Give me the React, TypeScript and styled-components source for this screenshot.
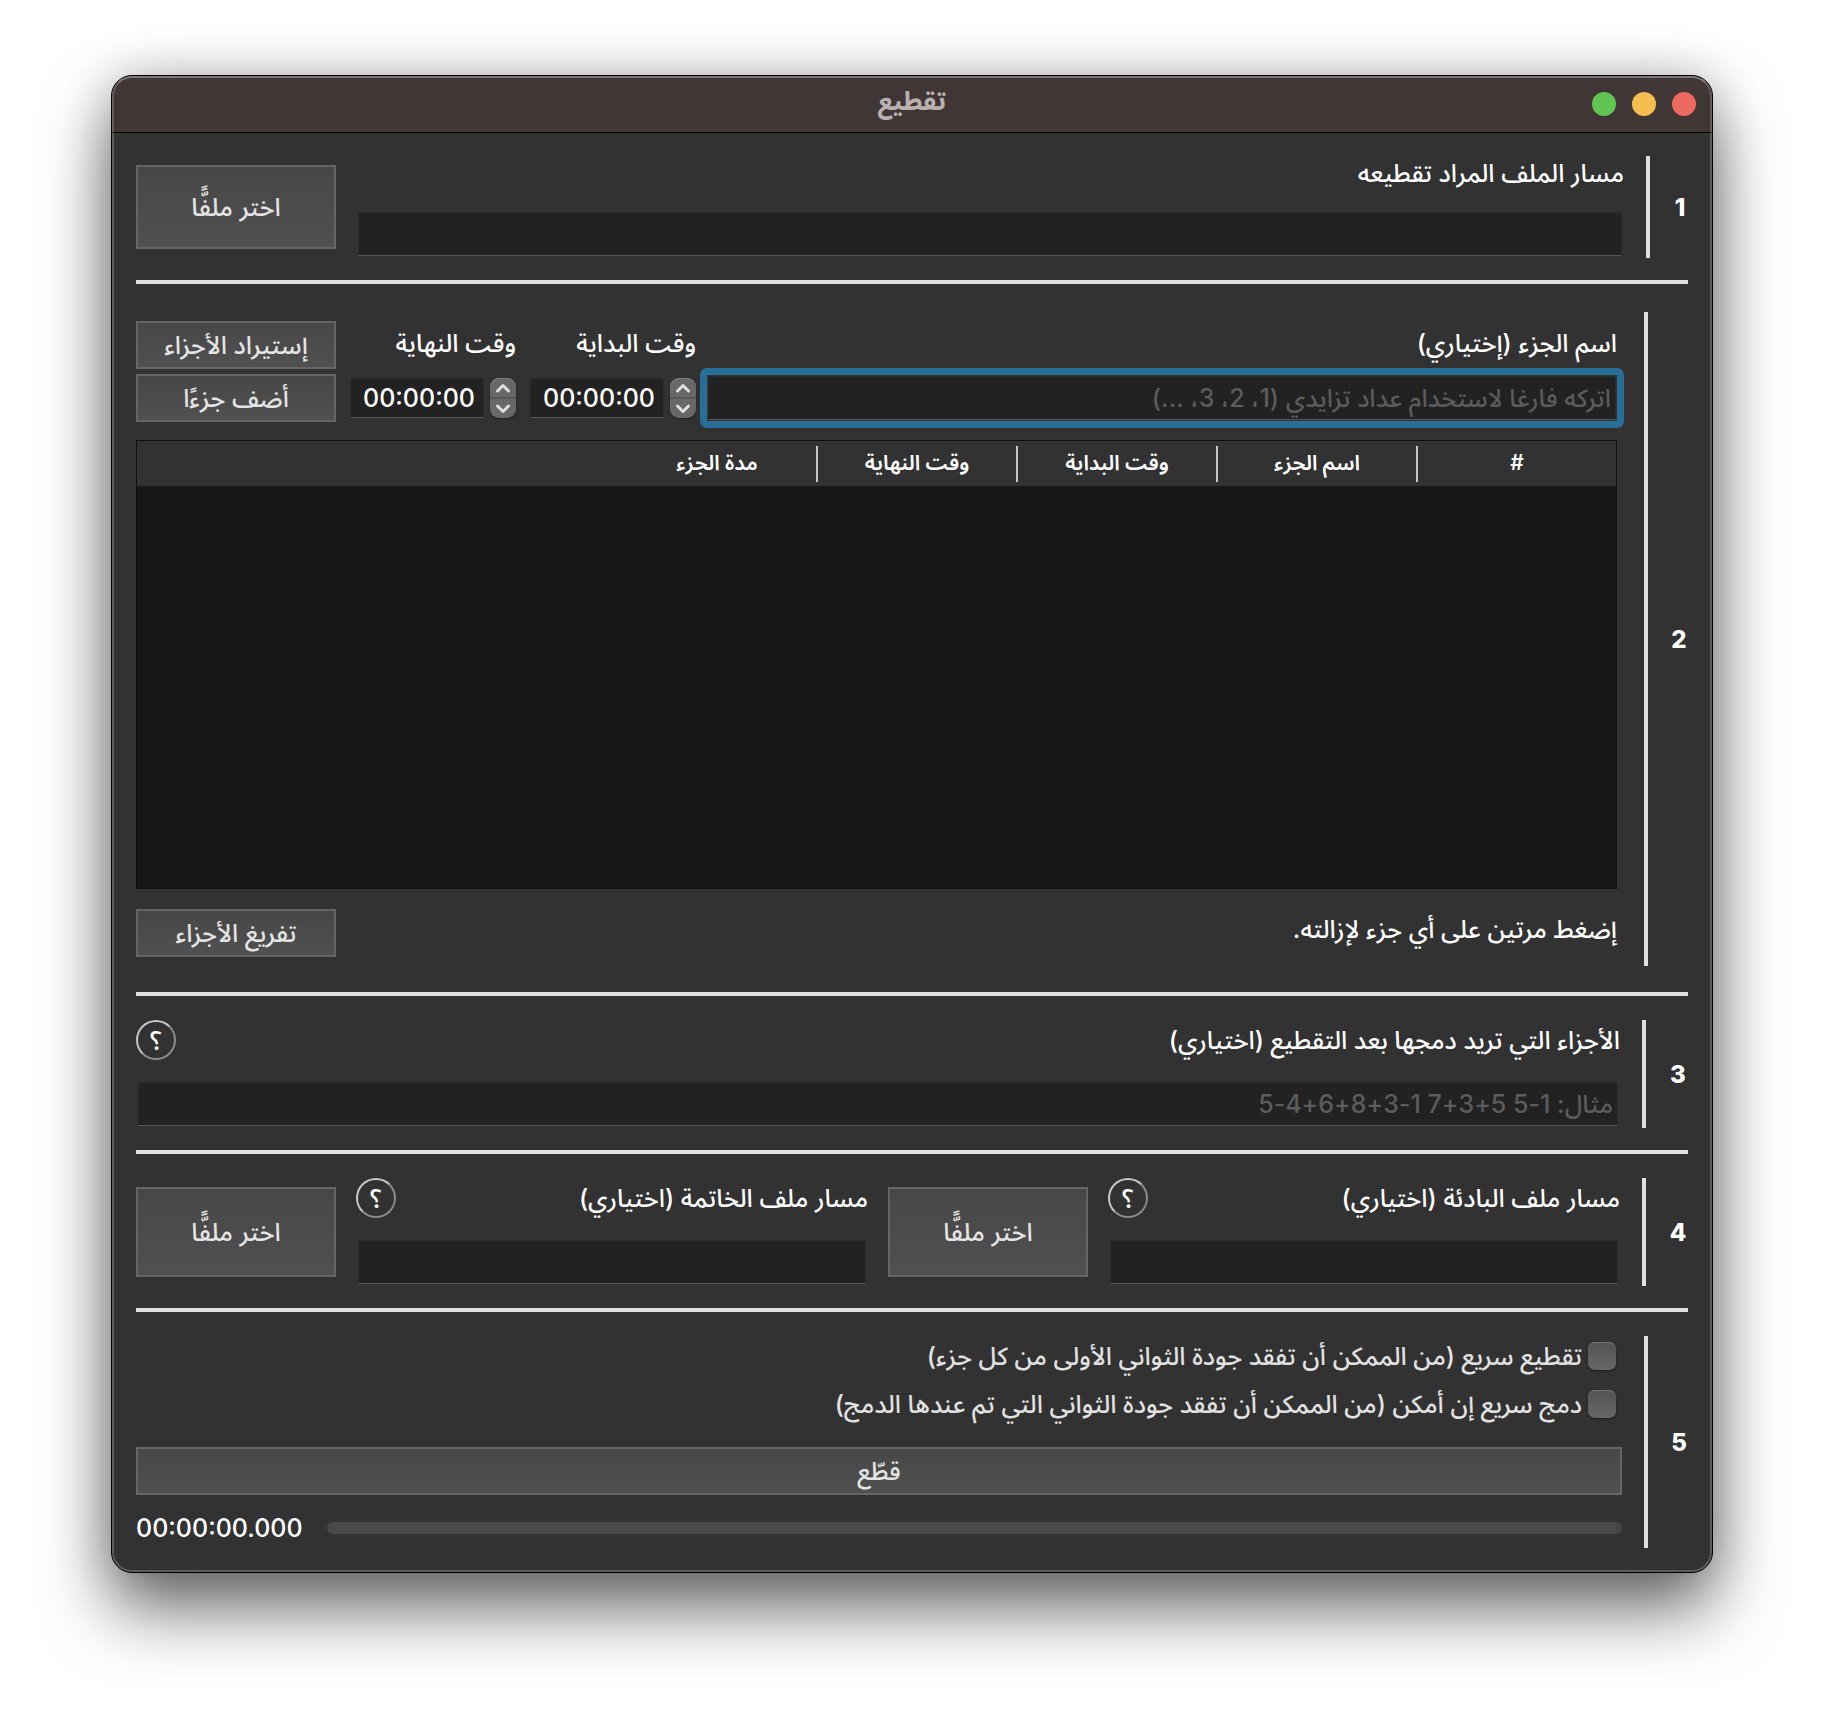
import React from "react";
import styled, { createGlobalStyle } from "styled-components";

const GlobalStyle = createGlobalStyle`
  *, *::before, *::after { box-sizing: border-box; }
  body {
    margin: 0;
    background: #fff;
    color: #fff;
    font-family: Inter, "Noto Sans Arabic", "DejaVu Sans", sans-serif;
    font-size: 25px;
    font-weight: 500;
  }
  button, input { font: inherit; color: inherit; margin: 0; }
`;

const Desktop = styled.main`
  display: flex;
  min-height: 100vh;
  padding: 75px 111px 147px;
`;

const Window = styled.section`
  position: relative;
  display: flex;
  flex: 1;
  flex-direction: column;
  min-width: 1200px;
  border: 1px solid #000;
  border-radius: 21px;
  background: #323232;
  box-shadow: 0 36px 70px rgba(0, 0, 0, 0.58), 0 0 50px rgba(0, 0, 0, 0.2);

  &::after {
    content: "";
    position: absolute;
    inset: 0;
    border: 2px solid rgba(255, 255, 255, 0.2);
    border-top-color: rgba(255, 255, 255, 0.32);
    border-radius: 20px;
    pointer-events: none;
  }
`;

const TitleBar = styled.header`
  display: grid;
  grid-template-columns: 1fr auto 1fr;
  align-items: center;
  height: 57px;
  padding: 0 16px;
  border-bottom: 1px solid #000;
  border-radius: 20px 20px 0 0;
  background: #403635;
`;

const Title = styled.h1`
  margin: 0;
  padding-bottom: 6px;
  color: #b8b1b0;
  font-size: 26px;
  font-weight: 700;
  line-height: 40px;
`;

const Lights = styled.div`
  display: flex;
  gap: 16px;
`;

const Light = styled.button<{ $color: string }>`
  width: 24px;
  height: 24px;
  padding: 0;
  border: 0;
  border-radius: 50%;
  background: ${(p) => p.$color};
`;

const Content = styled.div`
  display: flex;
  flex: 1;
  flex-direction: column;
  padding: 0 24px;
`;

const Step = styled.section<{ $grow?: boolean; $pad?: string }>`
  display: flex;
  flex: ${(p) => (p.$grow ? "1 0 auto" : "none")};
  gap: 22px;
  padding: ${(p) => p.$pad ?? "24px 0 22px"};

  & + & { border-top: 4px solid #e0e0e0; }
`;

const StepNumber = styled.h2<{ $width: number }>`
  align-self: center;
  width: ${(p) => p.$width}px;
  margin: 0;
  padding-top: 2px;
  font-size: 24px;
  font-weight: 800;
  line-height: 32px;
  text-align: center;
`;

const Divider = styled.div`
  width: 4px;
  background: #e0e0e0;
`;

const StepBody = styled.div<{ $column?: boolean }>`
  display: flex;
  flex: 1;
  flex-direction: ${(p) => (p.$column ? "column" : "row")};
  gap: ${(p) => (p.$column ? 0 : 20)}px;
  min-width: 0;
`;

const PushButton = styled.button<{ $tall?: boolean }>`
  flex: none;
  width: 200px;
  height: ${(p) => (p.$tall ? "auto" : "48px")};
  margin: ${(p) => (p.$tall ? "9px 0" : "0")};
  padding: 0;
  border: 2px solid #666;
  background: linear-gradient(#474747, #505050);
  color: #e4e4e4;
  line-height: 32px;
`;

const WideButton = styled(PushButton)`
  width: 100%;
  margin-top: 19px;
`;

const Field = styled.div`
  display: flex;
  flex: 1;
  flex-direction: column;
  gap: 22px;
  min-width: 0;
  padding-bottom: 2px;
`;

const FieldHead = styled.div<{ $height: number }>`
  display: flex;
  align-items: center;
  justify-content: space-between;
  height: ${(p) => p.$height}px;
`;

const Label = styled.label`
  line-height: 32px;
  white-space: nowrap;
`;

const TextBox = styled.input`
  min-width: 0;
  height: 44px;
  margin: 0 2px;
  padding: 0 4px;
  border: 1px solid #2c2c2c;
  border-bottom-color: #565656;
  outline: none;
  background: #222;

  &::placeholder { color: #5c5c5c; opacity: 1; }
`;

const HelpButton = styled.button`
  width: 40px;
  height: 40px;
  padding: 0;
  border: 2px solid;
  border-color: #c8c8c8 #8a8a8a #8a8a8a #c8c8c8;
  border-radius: 50%;
  background: transparent;
  line-height: 32px;
`;

const PartForm = styled.div`
  display: grid;
  grid-template-columns: 1fr 166px 166px 200px;
  grid-template-rows: 48px 50px;
  gap: 4px 14px;
  align-items: center;
  padding: 9px 5px 0 0;

  ${Label} { padding-bottom: 4px; }
`;

const FocusFrame = styled.div`
  display: flex;
  margin: 0 -7px 0 -10px;
  padding: 1px;
  border: 7px solid #276e99;
  border-radius: 7px;
`;

const NameBox = styled(TextBox)`
  flex: 1;
  margin: 0;
`;

const TimePicker = styled.div`
  display: flex;
  gap: 6px;
`;

const TimeBox = styled(TextBox)`
  flex: 1;
  height: 40px;
  margin: 0;
  padding: 0 8px;
  direction: ltr;
  text-align: right;
`;

const Stepper = styled.div`
  display: flex;
  flex-direction: column;
  width: 26px;
  height: 40px;
  overflow: hidden;
  border-radius: 9px;
  background: #686868;
  box-shadow: 0 1px 2px rgba(0, 0, 0, 0.4), inset 0 1px 0 #808080;
`;

const StepperButton = styled.button`
  display: flex;
  flex: 1;
  align-items: center;
  justify-content: center;
  padding: 0;
  border: 0;
  background: transparent;

  & + & { border-top: 2px solid #575757; }
`;

const PartsBox = styled.div`
  flex: 1 0 300px;
  margin: 17px 5px 20px 0;
  border: 1px solid #0f0f0f;
  background: #171717;
`;

const PartsTable = styled.table`
  width: 100%;
  border-collapse: collapse;
  table-layout: fixed;
`;

const HeadCell = styled.th<{ $auto?: boolean }>`
  width: ${(p) => (p.$auto ? "auto" : "200px")};
  height: 45px;
  padding: 0;
  background: #323232;
  font-size: 21px;
  font-weight: 600;
`;

const HeadText = styled.span<{ $line: boolean }>`
  display: block;
  padding-bottom: 2px;
  border-left: 2px solid ${(p) => (p.$line ? "#c4c4c4" : "transparent")};
  line-height: 34px;
`;

const PartsFoot = styled.div`
  display: flex;
  justify-content: space-between;
  padding: 0 5px 9px 0;
`;

const Hint = styled.p`
  margin: 0;
  line-height: 40px;
`;

const CheckRow = styled.label`
  display: flex;
  align-items: center;
  align-self: flex-start;
  gap: 6px;
  height: 48px;
  margin-right: 6px;
  color: #e2e2e2;
  line-height: 32px;
`;

const CheckBox = styled.input`
  appearance: none;
  width: 28px;
  height: 28px;
  border-radius: 7px;
  background: linear-gradient(#535353, #686868);
  box-shadow: 0 1px 2px rgba(0, 0, 0, 0.5), inset 0 1px 0 #757575;
`;

const Checks = styled.div`
  display: flex;
  flex-direction: column;
  margin-top: -4px;
`;

const ProgressRow = styled.div`
  display: flex;
  align-items: center;
  gap: 24px;
  padding: 15px 0 2px;
`;

const Progress = styled.progress`
  appearance: none;
  flex: 1;
  height: 12px;
  overflow: hidden;
  border: 0;
  border-radius: 6px;
  background: #484848;

  &::-webkit-progress-bar { background: #484848; }
  &::-webkit-progress-value { background: #276e99; }
`;

const Clock = styled.output`
  direction: ltr;
  line-height: 36px;
  text-align: left;
`;

const columns = ["#", "اسم الجزء", "وقت البداية", "وقت النهاية", "مدة الجزء"];

function Chevron({ up }: { up?: boolean }) {
  return (
    <svg width="16" height="12" viewBox="0 0 16 12" fill="none" stroke="#e0e0e0" strokeWidth="3" strokeLinecap="round" strokeLinejoin="round" aria-hidden="true">
      <path d={up ? "M2.5 9 8 3.5 13.5 9" : "M2.5 3 8 8.5 13.5 3"} />
    </svg>
  );
}

function TimeField({ id }: { id: string }) {
  return (
    <TimePicker>
      <Stepper>
        <StepperButton type="button" aria-label="زيادة"><Chevron up /></StepperButton>
        <StepperButton type="button" aria-label="إنقاص"><Chevron /></StepperButton>
      </Stepper>
      <TimeBox id={id} defaultValue="00:00:00" />
    </TimePicker>
  );
}

function FileField({ id, label, help }: { id: string; label: string; help?: boolean }) {
  return (
    <>
      <Field>
        <FieldHead $height={help ? 40 : 34}>
          <Label htmlFor={id}>{label}</Label>
          {help && <HelpButton type="button">؟</HelpButton>}
        </FieldHead>
        <TextBox id={id} />
      </Field>
      <PushButton type="button" $tall>اختر ملفًّا</PushButton>
    </>
  );
}

export default function App() {
  return (
    <Desktop dir="rtl" lang="ar">
      <GlobalStyle />
      <Window>
        <TitleBar>
          <Lights>
            <Light $color="#ec6a5e" aria-label="إغلاق" />
            <Light $color="#f4bf4f" aria-label="تصغير" />
            <Light $color="#61c554" aria-label="تكبير" />
          </Lights>
          <Title>تقطيع</Title>
        </TitleBar>
        <Content>
          <Step $pad="23px 0 22px">
            <StepNumber $width={16}>1</StepNumber>
            <Divider />
            <StepBody>
              <FileField id="source" label="مسار الملف المراد تقطيعه" />
            </StepBody>
          </Step>

          <Step $grow $pad="28px 0 26px">
            <StepNumber $width={18}>2</StepNumber>
            <Divider />
            <StepBody $column>
              <PartForm>
                <Label htmlFor="name">اسم الجزء (إختياري)</Label>
                <Label htmlFor="start">وقت البداية</Label>
                <Label htmlFor="end">وقت النهاية</Label>
                <PushButton type="button">إستيراد الأجزاء</PushButton>
                <FocusFrame>
                  <NameBox id="name" placeholder="اتركه فارغا لاستخدام عداد تزايدي (1، 2، 3، ...)" />
                </FocusFrame>
                <TimeField id="start" />
                <TimeField id="end" />
                <PushButton type="button">أضف جزءًا</PushButton>
              </PartForm>
              <PartsBox>
                <PartsTable>
                  <thead>
                    <tr>
                      {columns.map((name, i) => (
                        <HeadCell key={name} scope="col">
                          <HeadText $line={i < columns.length - 1}>{name}</HeadText>
                        </HeadCell>
                      ))}
                      <HeadCell as="td" $auto />
                    </tr>
                  </thead>
                  <tbody />
                </PartsTable>
              </PartsBox>
              <PartsFoot>
                <Hint>إضغط مرتين على أي جزء لإزالته.</Hint>
                <PushButton type="button">تفريغ الأجزاء</PushButton>
              </PartsFoot>
            </StepBody>
          </Step>

          <Step>
            <StepNumber $width={20}>3</StepNumber>
            <Divider />
            <StepBody>
              <Field>
                <FieldHead $height={40}>
                  <Label htmlFor="merge">الأجزاء التي تريد دمجها بعد التقطيع (اختياري)</Label>
                  <HelpButton type="button">؟</HelpButton>
                </FieldHead>
                <TextBox id="merge" placeholder="مثال: 1-5 5+3+7 1-3+8+6+4-5" />
              </Field>
            </StepBody>
          </Step>

          <Step>
            <StepNumber $width={20}>4</StepNumber>
            <Divider />
            <StepBody>
              <FileField id="intro" label="مسار ملف البادئة (اختياري)" help />
              <FileField id="outro" label="مسار ملف الخاتمة (اختياري)" help />
            </StepBody>
          </Step>

          <Step $pad="24px 0">
            <StepNumber $width={18}>5</StepNumber>
            <Divider />
            <StepBody $column>
              <Checks>
                <CheckRow><CheckBox type="checkbox" />تقطيع سريع (من الممكن أن تفقد جودة الثواني الأولى من كل جزء)</CheckRow>
                <CheckRow><CheckBox type="checkbox" />دمج سريع إن أمكن (من الممكن أن تفقد جودة الثواني التي تم عندها الدمج)</CheckRow>
              </Checks>
              <WideButton type="button">قطّع</WideButton>
              <ProgressRow>
                <Progress value={0} max={100} aria-label="التقدم" />
                <Clock>00:00:00.000</Clock>
              </ProgressRow>
            </StepBody>
          </Step>
        </Content>
      </Window>
    </Desktop>
  );
}
